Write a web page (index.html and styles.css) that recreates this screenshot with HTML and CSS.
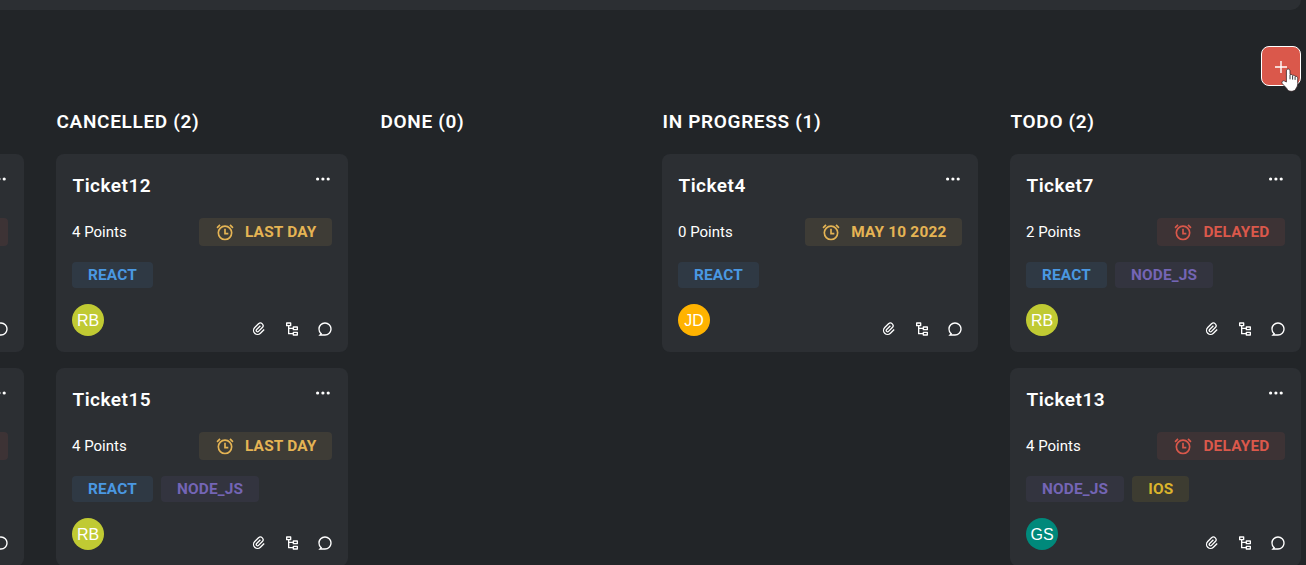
FILE: index.html
```html
<!DOCTYPE html>
<html lang="en">
<head>
<meta charset="utf-8">
<title>Task board</title>
<link rel="stylesheet" href="styles.css">
</head>
<body>
<svg class="sprite" aria-hidden="true">
  <symbol id="clock" viewBox="0 0 24 24"><path fill="currentColor" d="M12 22a9 9 0 1 1 0-18 9 9 0 0 1 0 18zm0-2a7 7 0 1 0 0-14 7 7 0 0 0 0 14zm1-7h3v2h-5V8h2v5zM1.747 6.282l3.535-3.535 1.415 1.414L3.16 7.697 1.747 6.282zm16.97-3.535l3.536 3.535-1.414 1.415-3.536-3.536 1.415-1.414z"/></symbol>
  <symbol id="dots" viewBox="0 0 16 4"><g fill="currentColor"><circle cx="2.6" cy="2" r="1.6"/><circle cx="7.9" cy="2" r="1.6"/><circle cx="13.2" cy="2" r="1.6"/></g></symbol>
  <symbol id="clip" viewBox="0 0 24 24"><path fill="currentColor" d="M14.828 7.757l-5.656 5.657a1 1 0 1 0 1.414 1.414l5.657-5.656A3 3 0 1 0 12 4.929l-5.657 5.657a5 5 0 1 0 7.071 7.07L19.071 12l1.414 1.414-5.657 5.657a7 7 0 1 1-9.9-9.9l5.658-5.656a5 5 0 0 1 7.07 7.07L12 16.244A3 3 0 1 1 7.757 12l5.657-5.657 1.414 1.414z"/></symbol>
  <symbol id="tree" viewBox="0 0 24 24"><path fill="currentColor" d="M10 2a1 1 0 0 1 1 1v4a1 1 0 0 1-1 1H8v2h5V9a1 1 0 0 1 1-1h6a1 1 0 0 1 1 1v4a1 1 0 0 1-1 1h-6a1 1 0 0 1-1-1v-1H8v6h5v-1a1 1 0 0 1 1-1h6a1 1 0 0 1 1 1v4a1 1 0 0 1-1 1h-6a1 1 0 0 1-1-1v-1H7a1 1 0 0 1-1-1V8H4a1 1 0 0 1-1-1V3a1 1 0 0 1 1-1h6zm9 16h-4v2h4v-2zm0-8h-4v2h4v-2zM9 4H5v2h4V4z"/></symbol>
  <symbol id="chat" viewBox="0 0 24 24"><path fill="currentColor" d="M2 12C2 6.477 6.477 2 12 2s10 4.477 10 10-4.477 10-10 10H2l2.929-2.929A9.969 9.969 0 0 1 2 12zm4.828 8H12a8 8 0 1 0-8-8c0 2.152.851 4.165 2.343 5.657l1.414 1.414-.929.929z"/></symbol>
</svg>
<header class="topbar"></header>
<div class="actions">
  <button class="add" aria-label="Add task"><svg class="plus" viewBox="0 0 14 14"><path d="M7 1v12M1 7h12" stroke="currentColor" stroke-width="1.4"/></svg></button>
  <svg class="cursor" viewBox="0 0 18 24"><path d="M5.4 14V3c0-2.600 3.600-2.600 3.600 0v3.600c1.100-.4 2.200 0 2.600.8 1-.4 2.200 0 2.500.9 1.300-.3 2.600.4 2.600 1.900v5.300c0 2.200-.6 3.300-1.400 4.600-1 2.600-2.900 3.200-5 3.200-2.400 0-3.700-1-4.500-2.800L1.200 15.600c-1.100-1.900.8-3.600 2.500-2.500z" fill="#fff" stroke="#33262a" stroke-width=".8"/><path d="M9 7v4.300M11.600 7.800v3.800M14.100 8.700v3.200" stroke="#222528" stroke-width=".9"/></svg>
</div>
<main class="board">
  <section class="column">
    <h2 class="column-title">BACKLOG (2)</h2>
    <article class="card">
      <div class="card-head"><h3 class="card-title">Ticket1</h3><svg class="dots"><use href="#dots"/></svg></div>
      <div class="meta"><span>4 Points</span><span class="due late"><svg class="clock"><use href="#clock"/></svg>DELAYED</span></div>
      <div class="tags"><span class="tag react">REACT</span></div>
      <div class="foot"><span class="avatar lime">RB</span><div class="icons"><svg><use href="#clip"/></svg><svg><use href="#tree"/></svg><svg><use href="#chat"/></svg></div></div>
    </article>
    <article class="card">
      <div class="card-head"><h3 class="card-title">Ticket2</h3><svg class="dots"><use href="#dots"/></svg></div>
      <div class="meta"><span>4 Points</span><span class="due late"><svg class="clock"><use href="#clock"/></svg>DELAYED</span></div>
      <div class="tags"><span class="tag react">REACT</span></div>
      <div class="foot"><span class="avatar lime">RB</span><div class="icons"><svg><use href="#clip"/></svg><svg><use href="#tree"/></svg><svg><use href="#chat"/></svg></div></div>
    </article>
  </section>
  <section class="column">
    <h2 class="column-title">CANCELLED (2)</h2>
    <article class="card">
      <div class="card-head"><h3 class="card-title">Ticket12</h3><svg class="dots"><use href="#dots"/></svg></div>
      <div class="meta"><span>4 Points</span><span class="due soon"><svg class="clock"><use href="#clock"/></svg>LAST DAY</span></div>
      <div class="tags"><span class="tag react">REACT</span></div>
      <div class="foot"><span class="avatar lime">RB</span><div class="icons"><svg><use href="#clip"/></svg><svg><use href="#tree"/></svg><svg><use href="#chat"/></svg></div></div>
    </article>
    <article class="card">
      <div class="card-head"><h3 class="card-title">Ticket15</h3><svg class="dots"><use href="#dots"/></svg></div>
      <div class="meta"><span>4 Points</span><span class="due soon"><svg class="clock"><use href="#clock"/></svg>LAST DAY</span></div>
      <div class="tags"><span class="tag react">REACT</span><span class="tag node">NODE_JS</span></div>
      <div class="foot"><span class="avatar lime">RB</span><div class="icons"><svg><use href="#clip"/></svg><svg><use href="#tree"/></svg><svg><use href="#chat"/></svg></div></div>
    </article>
  </section>
  <section class="column empty">
    <h2 class="column-title">DONE (0)</h2>
  </section>
  <section class="column wide">
    <h2 class="column-title">IN PROGRESS (1)</h2>
    <article class="card">
      <div class="card-head"><h3 class="card-title">Ticket4</h3><svg class="dots"><use href="#dots"/></svg></div>
      <div class="meta"><span>0 Points</span><span class="due soon"><svg class="clock"><use href="#clock"/></svg>MAY 10 2022</span></div>
      <div class="tags"><span class="tag react">REACT</span></div>
      <div class="foot"><span class="avatar orange">JD</span><div class="icons"><svg><use href="#clip"/></svg><svg><use href="#tree"/></svg><svg><use href="#chat"/></svg></div></div>
    </article>
  </section>
  <section class="column last">
    <h2 class="column-title">TODO (2)</h2>
    <article class="card">
      <div class="card-head"><h3 class="card-title">Ticket7</h3><svg class="dots"><use href="#dots"/></svg></div>
      <div class="meta"><span>2 Points</span><span class="due late"><svg class="clock"><use href="#clock"/></svg>DELAYED</span></div>
      <div class="tags"><span class="tag react">REACT</span><span class="tag node">NODE_JS</span></div>
      <div class="foot"><span class="avatar lime">RB</span><div class="icons"><svg><use href="#clip"/></svg><svg><use href="#tree"/></svg><svg><use href="#chat"/></svg></div></div>
    </article>
    <article class="card">
      <div class="card-head"><h3 class="card-title">Ticket13</h3><svg class="dots"><use href="#dots"/></svg></div>
      <div class="meta"><span>4 Points</span><span class="due late"><svg class="clock"><use href="#clock"/></svg>DELAYED</span></div>
      <div class="tags"><span class="tag node">NODE_JS</span><span class="tag ios">IOS</span></div>
      <div class="foot"><span class="avatar teal">GS</span><div class="icons"><svg><use href="#clip"/></svg><svg><use href="#tree"/></svg><svg><use href="#chat"/></svg></div></div>
    </article>
  </section>
</main>
</body>
</html>
```
FILE: styles.css
```css
* { box-sizing: border-box; }
body {
  margin: 0;
  height: 565px;
  overflow: hidden;
  display: flex;
  flex-direction: column;
  background: #222528;
  color: #fff;
  font: 15px/24px Roboto, sans-serif;
}
h2, h3 { margin: 0; }
.sprite { position: absolute; width: 0; height: 0; }
.topbar { flex: none; height: 10px; margin-right: 5px; background: #2c2f33; border-radius: 0 0 16px 0; }
.actions { position: relative; flex: none; display: flex; justify-content: flex-end; padding: 36px 5px 0 0; }
.add {
  width: 40px; height: 40px; padding: 0;
  display: grid; place-items: center;
  border: 1px solid #fff; border-radius: 8px;
  background: #da584b; color: #fff;
}
.plus { width: 14px; height: 14px; margin-top: 2px; }
.cursor { position: absolute; right: 7px; bottom: -6px; width: 18px; height: 24px; }
.board { flex: none; display: flex; justify-content: flex-end; gap: 32px; padding: 20px 5px 0 0; }
.column { flex: none; width: 292px; display: flex; flex-direction: column; gap: 16px; }
.column.empty { width: 250px; }
.column.wide { width: 316px; }
.column.last { width: 291px; }
.column-title { height: 32px; padding-left: .5px; font-size: 19px; line-height: 32px; font-weight: 600; letter-spacing: .67px; white-space: nowrap; }
.card { height: 198px; padding: 16px; display: flex; flex-direction: column; gap: 16px; background: #2c2f33; border-radius: 8px; }
.card-head { height: 32px; display: flex; justify-content: space-between; }
.card-title { padding-left: .5px; font-size: 19px; line-height: 32px; font-weight: 600; letter-spacing: .5px; }
.dots { width: 16px; height: 4px; margin: 7px 1px 0 0; }
.meta { height: 28px; display: flex; justify-content: space-between; align-items: center; }
.due { height: 28px; padding: 0 15.5px 0 16px; display: flex; align-items: center; gap: 10px; border-radius: 4px; font-size: 15.4px; font-weight: 700; letter-spacing: .2px; line-height: 28px; }
.clock { width: 20px; height: 20px; }
.soon { background: rgba(229, 180, 84, .1); color: #e5b454; }
.late { background: rgba(218, 88, 75, .1); color: #da584b; }
.tags { display: flex; gap: 8px; }
.tag { height: 26px; padding: 0 16px; line-height: 26px; border-radius: 4px; font-size: 15.4px; font-weight: 700; letter-spacing: .17px; }
.react { background: rgba(74, 144, 226, .1); color: #4a98e2; }
.node { background: rgba(113, 96, 180, .1); color: #7465b5; }
.ios { background: rgba(219, 180, 44, .1); color: #dbb42c; }
.foot { height: 32px; display: flex; justify-content: space-between; align-items: flex-end; }
.avatar { width: 32px; height: 32px; border-radius: 50%; text-align: center; font: 16px/33px "Liberation Sans", Arial, sans-serif; }
.lime { background: #c0ca33; }
.orange { background: #ffb300; }
.teal { background: #00897b; }
.icons { display: flex; gap: 17px; margin: 0 -.5px -.5px 0; }
.icons svg { width: 16px; height: 16px; }
```
